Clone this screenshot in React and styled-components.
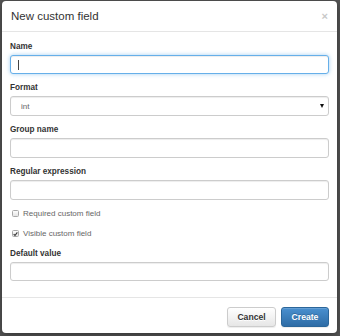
import styled, { createGlobalStyle } from "styled-components";

const GlobalStyle = createGlobalStyle`
  html, body {
    margin: 0;
    padding: 0;
    background: #555;
  }
  * {
    box-sizing: border-box;
  }
`;

const fields = [
  { id: "name", label: "Name", focused: true },
  { id: "format", label: "Format", select: "int" },
  { id: "group", label: "Group name" },
  { id: "regex", label: "Regular expression" },
];

export default function App() {
  return (
    <>
      <GlobalStyle />
      <Backdrop>
        <Modal>
          <Header>
            <Title>New custom field</Title>
            <Close>×</Close>
          </Header>

          <Body>
            {fields.map((field) => (
              <FormGroup key={field.id}>
                <Label htmlFor={field.id}>{field.label}</Label>
                {field.select ? (
                  <SelectBox id={field.id}>
                    <span>{field.select}</span>
                    <Arrow />
                  </SelectBox>
                ) : (
                  <InputWrap>
                    <Input id={field.id} $focused={field.focused} />
                    {field.focused && <Caret />}
                  </InputWrap>
                )}
              </FormGroup>
            ))}

            <CheckRow>
              <CheckBox />
              Required custom field
            </CheckRow>
            <CheckRow>
              <CheckBox $checked>
                <svg width="6" height="6" viewBox="0 0 6 6">
                  <path d="M0.8 3.2 L2.4 4.8 L5.2 1" stroke="#333" strokeWidth="1.3" fill="none" />
                </svg>
              </CheckBox>
              Visible custom field
            </CheckRow>

            <FormGroup>
              <Label htmlFor="default">Default value</Label>
              <InputWrap>
                <Input id="default" />
              </InputWrap>
            </FormGroup>
          </Body>

          <Footer>
            <Button>Cancel</Button>
            <Button $primary>Create</Button>
          </Footer>
        </Modal>
      </Backdrop>
    </>
  );
}

const Backdrop = styled.div`
  padding: 1px 0 0 2px;
  height: 336px;
  font-family: "Liberation Sans", Arial, sans-serif;
`;

const Modal = styled.div`
  width: 335px;
  height: 332px;
  background: #fff;
  border-radius: 4px;
  box-shadow: 0 2px 8px rgba(0, 0, 0, 0.4);
  display: flex;
  flex-direction: column;
`;

const Header = styled.div`
  height: 31.7px;
  border-bottom: 1px solid #e5e5e5;
  display: flex;
  align-items: center;
  justify-content: space-between;
  padding: 0 9px 0 9px;
`;

const Title = styled.h4`
  margin: 0;
  font-size: 11.5px;
  font-weight: normal;
  color: #333;
`;

const Close = styled.span`
  font-size: 11px;
  font-weight: bold;
  color: #c8c8c8;
  line-height: 1;
`;

const Body = styled.div`
  padding: 8.3px 8px 8px 8px;
  flex: 1;
`;

const FormGroup = styled.div`
  margin-bottom: 8px;
`;

const Label = styled.label`
  display: block;
  font-size: 8.2px;
  line-height: 12px;
  font-weight: bold;
  color: #333;
  margin-bottom: 2px;
`;

const InputWrap = styled.div`
  position: relative;
`;

const Input = styled.input`
  display: block;
  width: 100%;
  height: 19.7px;
  border-radius: 3px;
  border: 1px solid ${(p) => (p.$focused ? "#66afe9" : "#ccc")};
  box-shadow: ${(p) =>
    p.$focused
      ? "inset 0 1px 1px rgba(0,0,0,.075), 0 0 4px rgba(102,175,233,.6)"
      : "inset 0 1px 1px rgba(0,0,0,.075)"};
  outline: none;
  background: #fff;
`;

const Caret = styled.span`
  position: absolute;
  left: 8px;
  top: 5px;
  width: 1px;
  height: 10px;
  background: #444;
`;

const SelectBox = styled.div`
  height: 19.7px;
  border-radius: 3px;
  border: 1px solid #ccc;
  box-shadow: inset 0 1px 1px rgba(0, 0, 0, 0.075);
  display: flex;
  align-items: center;
  justify-content: space-between;
  padding: 0 4px 0 10px;
  font-size: 8px;
  color: #666;
`;

const Arrow = styled.span`
  width: 0;
  height: 0;
  border-left: 2.5px solid transparent;
  border-right: 2.5px solid transparent;
  border-top: 4px solid #111;
`;

const CheckRow = styled.label`
  display: flex;
  align-items: center;
  gap: 4px;
  height: 12px;
  margin-bottom: 8px;
  padding-left: 2px;
  font-size: 8px;
  color: #666;
`;

const CheckBox = styled.span`
  width: 7px;
  height: 7px;
  border: 1px solid #a8a8a8;
  border-radius: 1.5px;
  background: linear-gradient(#fdfdfd, #e4e4e4);
  display: flex;
  align-items: center;
  justify-content: center;
`;

const Footer = styled.div`
  height: 36px;
  border-top: 1px solid #e5e5e5;
  display: flex;
  justify-content: flex-end;
  align-items: flex-start;
  gap: 5px;
  padding: 9px 8px 0 0;
`;

const Button = styled.button`
  width: ${(p) => (p.$primary ? "48px" : "49px")};
  height: 19.5px;
  border-radius: 3px;
  font-family: inherit;
  font-size: 8.6px;
  font-weight: bold;
  padding: 0;
  cursor: pointer;
  color: ${(p) => (p.$primary ? "#fff" : "#333")};
  border: 1px solid ${(p) => (p.$primary ? "#2b669a" : "#ccc")};
  background: ${(p) =>
    p.$primary
      ? "linear-gradient(#4a90cf, #2e6ca6)"
      : "linear-gradient(#fff, #e6e6e6)"};
  text-shadow: ${(p) =>
    p.$primary ? "0 -1px 0 rgba(0,0,0,.2)" : "0 1px 0 #fff"};
  box-shadow: inset 0 1px 0 rgba(255, 255, 255, 0.15),
    0 1px 1px rgba(0, 0, 0, 0.075);
`;
